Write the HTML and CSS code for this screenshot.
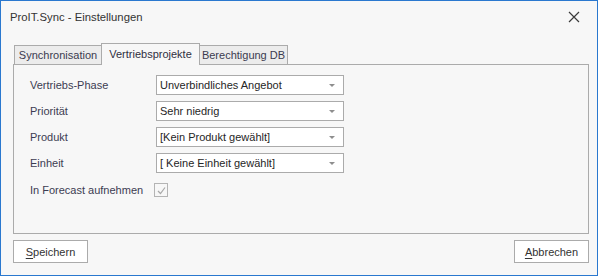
FILE: index.html
```html
<!DOCTYPE html>
<html lang="de">
<head>
<meta charset="utf-8">
<title>ProIT.Sync - Einstellungen</title>
<link rel="stylesheet" href="styles.css">
</head>
<body>
<div class="window">
  <div class="titlebar">
    <span class="title">ProIT.Sync - Einstellungen</span>
    <svg class="close" width="12" height="12" viewBox="0 0 12 12"><path d="M1 1 L11 11 M11 1 L1 11" stroke="#3a3a3a" stroke-width="1.2" fill="none"/></svg>
  </div>
  <div class="content">
    <div class="tabs">
      <div class="tab tab-sync">Synchronisation</div>
      <div class="tab tab-active">Vertriebsprojekte</div>
      <div class="tab tab-db">Berechtigung DB</div>
    </div>
    <div class="panel">
      <div class="form">
        <div class="label">Vertriebs-Phase</div>
        <div class="combo"><span>Unverbindliches Angebot</span><i class="arrow"></i></div>
        <div class="label">Priorität</div>
        <div class="combo"><span>Sehr niedrig</span><i class="arrow"></i></div>
        <div class="label">Produkt</div>
        <div class="combo"><span>[Kein Produkt gewählt]</span><i class="arrow"></i></div>
        <div class="label">Einheit</div>
        <div class="combo"><span>[ Keine Einheit gewählt]</span><i class="arrow"></i></div>
        <div class="label label-check">In Forecast aufnehmen</div>
        <div class="check"><svg width="11" height="11" viewBox="0 0 11 11"><path d="M2 6 L4.5 8.5 L9 2.5" stroke="#a8a8a8" stroke-width="1.2" fill="none"/></svg></div>
      </div>
    </div>
    <div class="buttons">
      <div class="btn"><u>S</u>peichern</div>
      <div class="btn"><u>A</u>bbrechen</div>
    </div>
  </div>
</div>
</body>
</html>
```

FILE: styles.css
```css
html, body {
  margin: 0;
  padding: 0;
  background: #f7f7f7;
}
body {
  font-family: "Liberation Sans", Arial, sans-serif;
  font-size: 11px;
  white-space: nowrap;
}
.window {
  width: 598px;
  height: 276px;
  box-sizing: border-box;
  border: 1px solid #2a78cf;
  background: #f7f7f7;
  display: flex;
  flex-direction: column;
}
.titlebar {
  height: 31px;
  display: flex;
  align-items: center;
  justify-content: space-between;
  padding: 0 17px 0 9px;
  color: #333;
  font-size: 11.3px;
}
.close {
  display: block;
}
.content {
  padding: 0 8px 0 12px;
  display: flex;
  flex-direction: column;
}
.tabs {
  margin-top: 11px;
  height: 21px;
  display: flex;
  align-items: flex-end;
  padding-left: 1px;
}
.tab {
  box-sizing: border-box;
  height: 19px;
  border: 1px solid #ababab;
  border-bottom: none;
  background: #ececec;
  color: #3b3b4f;
  text-align: center;
  line-height: 18px;
}
.tab-sync {
  width: 87px;
  border-right: none;
}
.tab-active {
  width: 99px;
  height: 22px;
  margin-bottom: -1px;
  background: #f7f7f7;
  line-height: 20px;
  position: relative;
  z-index: 1;
  color: #2f2f3f;
}
.tab-db {
  width: 88px;
  border-left: none;
}
.panel {
  box-sizing: border-box;
  height: 170px;
  border: 1px solid #ababab;
  background: #f7f7f7;
  padding: 10px 0 0 16px;
}
.form {
  display: grid;
  grid-template-columns: 126px 188px;
  grid-auto-rows: 20px;
  row-gap: 6px;
  align-items: center;
}
.label {
  color: #3c3c52;
}
.label-check {
  margin-top: 2px;
  align-self: stretch;
  display: flex;
  align-items: center;
}
.combo {
  box-sizing: border-box;
  height: 20px;
  border: 1px solid #ababab;
  background: #fff;
  display: flex;
  align-items: center;
  justify-content: space-between;
  padding: 0 8px 0 3px;
  color: #262626;
}
.arrow {
  width: 0;
  height: 0;
  border-left: 3px solid transparent;
  border-right: 3px solid transparent;
  border-top: 3px solid #8e8e8e;
}
.check {
  box-sizing: border-box;
  width: 14px;
  height: 14px;
  margin-left: -2px;
  margin-top: 2px;
  border: 1px solid #b4b4b4;
  background: #f7f7f7;
  display: flex;
  align-items: center;
  justify-content: center;
}
.check svg {
  display: block;
}
.buttons {
  margin-top: 6px;
  display: flex;
  justify-content: space-between;
}
.btn {
  box-sizing: border-box;
  width: 75px;
  height: 23px;
  border: 1px solid #ababab;
  background: #fff;
  color: #333;
  display: flex;
  align-items: center;
  justify-content: center;
}
.btn u {
  text-decoration-thickness: 1px;
  text-underline-offset: 2px;
}
```
